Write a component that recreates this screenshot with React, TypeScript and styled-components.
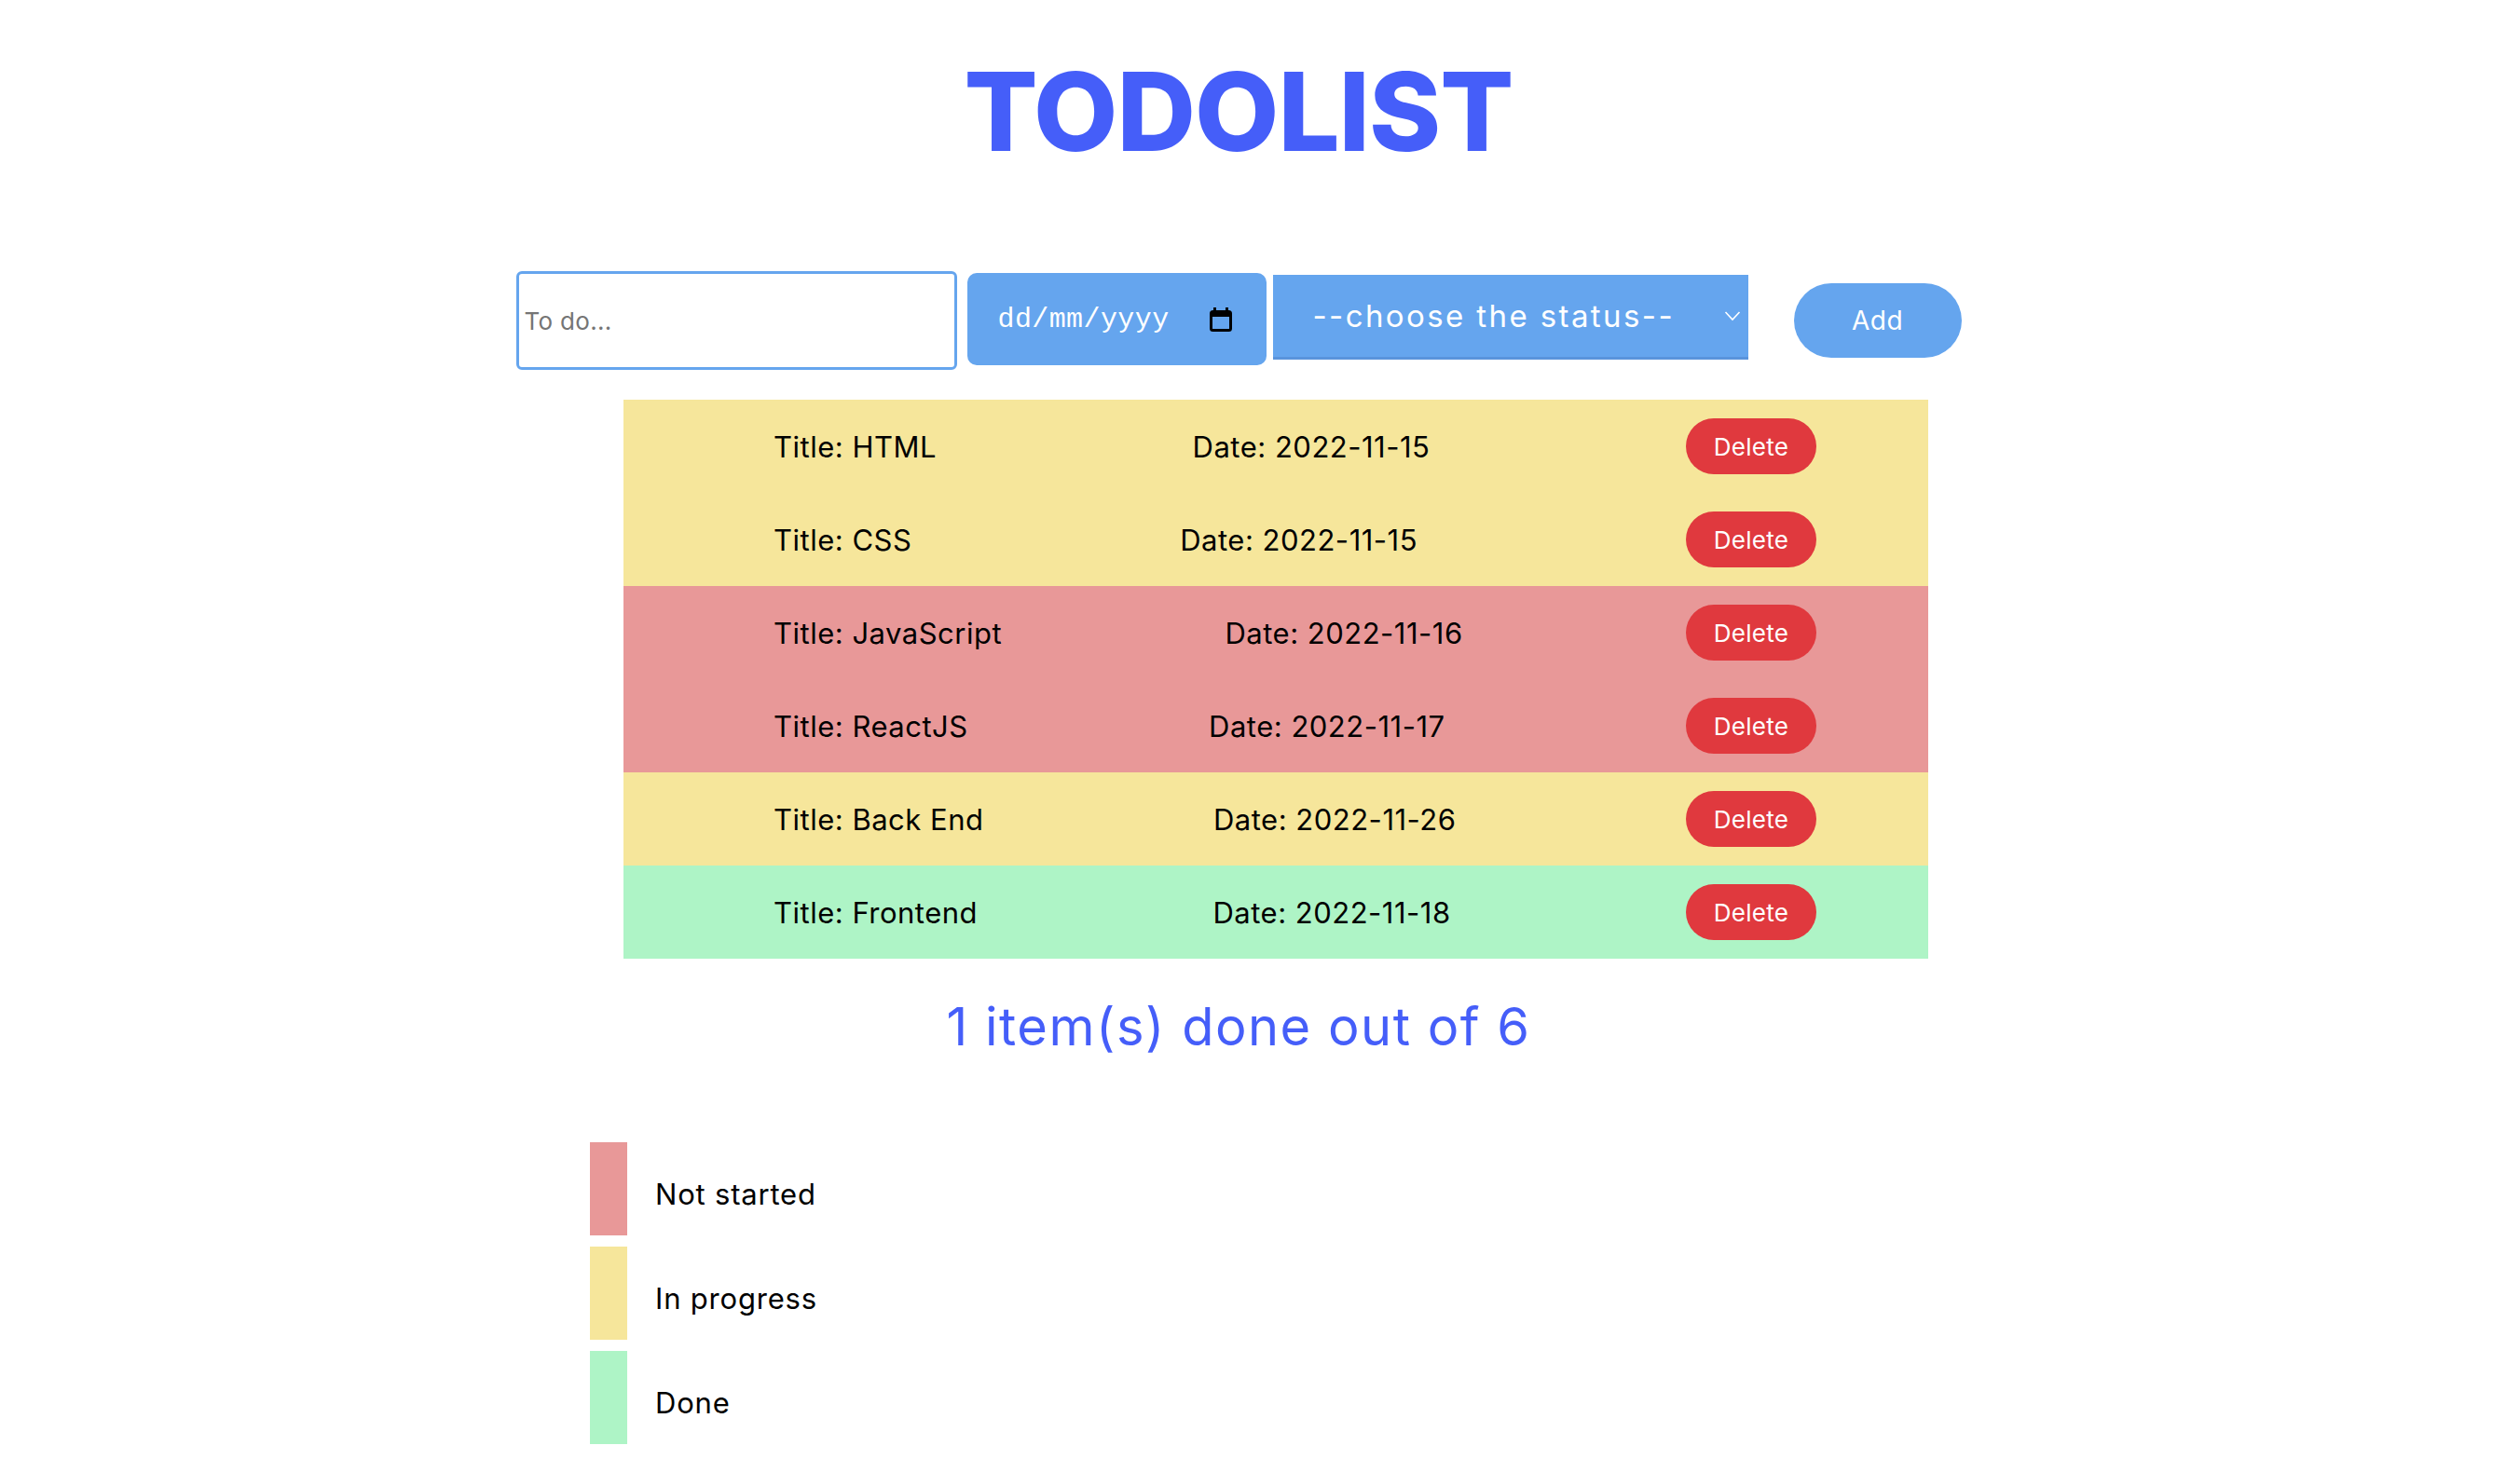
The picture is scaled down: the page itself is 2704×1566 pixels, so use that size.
import React from 'react';
import styled, { createGlobalStyle } from 'styled-components';

const GlobalStyle = createGlobalStyle`
  body {
    margin: 0;
    background: #ffffff;
    font-family: Inter, "Noto Sans", sans-serif;
    color: #000000;
  }
  * {
    box-sizing: border-box;
  }
`;

type Status = 'todo' | 'progress' | 'done';

const statusColors: Record<Status, string> = {
  todo: '#e89898',
  progress: '#f6e69b',
  done: '#aef4c6',
};

const Page = styled.div`
  padding: 61px 46px 0 0;
`;

const Heading = styled.h1`
  margin: 0;
  text-align: center;
  font-size: 117px;
  line-height: 117px;
  font-weight: 800;
  letter-spacing: -1px;
  color: #455ef9;
`;

const Form = styled.form`
  display: flex;
  justify-content: center;
  align-items: flex-start;
  margin-top: 113px;
`;

const TextInput = styled.input`
  width: 473px;
  height: 106px;
  border: 3px solid #65a5ee;
  border-radius: 6px;
  padding: 0 0 0 6px;
  font-family: Inter, sans-serif;
  font-size: 26px;
  letter-spacing: 0.3px;
  color: #222;
  outline: none;

  &::placeholder {
    color: #757575;
  }
`;

const DateField = styled.div`
  width: 321px;
  height: 99px;
  margin: 2px 0 0 11px;
  border-radius: 10px;
  background: #65a5ee;
  display: flex;
  align-items: center;
  justify-content: space-between;
  padding: 0 37px 0 33px;
  font-family: "Liberation Mono", "Courier New", monospace;
  font-size: 30px;
  letter-spacing: 0.4px;
  color: #ffffff;
`;

const SelectBox = styled.div`
  width: 510px;
  height: 91px;
  margin: 4px 0 0 7px;
  background: #65a5ee;
  border-bottom: 3px solid #5a94dc;
  display: flex;
  align-items: center;
  padding: 0 8px 0 0;
`;

const StatusSelect = styled.select`
  flex: 1;
  height: 100%;
  appearance: none;
  border: none;
  outline: none;
  background: transparent;
  padding: 0 0 0 43px;
  font-family: Inter, sans-serif;
  font-size: 33px;
  letter-spacing: 2.4px;
  color: #ffffff;
`;

const AddButton = styled.button`
  width: 180px;
  height: 80px;
  margin: 13px 0 0 49px;
  border: none;
  border-radius: 40px;
  background: #65a5ee;
  color: #ffffff;
  font-family: Inter, sans-serif;
  font-size: 28px;
  letter-spacing: 0.5px;
  cursor: pointer;
`;

const List = styled.ul`
  list-style: none;
  margin: 32px 0 0;
  padding: 0 0 0 80px;
  display: flex;
  flex-direction: column;
  align-items: center;
`;

const Row = styled.li<{ status: Status }>`
  width: 1400px;
  height: 100px;
  display: flex;
  align-items: center;
  justify-content: space-between;
  padding: 0 120px 0 161px;
  background: ${p => statusColors[p.status]};
  font-size: 31px;
  letter-spacing: 0.5px;
`;

const Cell = styled.span`
  white-space: nowrap;
`;

const DeleteButton = styled.button`
  width: 140px;
  height: 60px;
  border: none;
  border-radius: 30px;
  background: #e0393e;
  color: #ffffff;
  font-family: Inter, sans-serif;
  font-size: 26px;
  letter-spacing: 0.3px;
  cursor: pointer;
`;

const Counter = styled.p`
  margin: 40px 0 0;
  text-align: center;
  font-size: 56px;
  line-height: 66px;
  letter-spacing: 1.5px;
  color: #455ef9;
`;

const Legend = styled.ul`
  list-style: none;
  margin: 91px 0 0;
  padding: 0 0 0 633px;
  display: flex;
  flex-direction: column;
  gap: 12px;
`;

const LegendItem = styled.li`
  display: flex;
  align-items: center;
  gap: 30px;
`;

const Swatch = styled.span<{ status: Status }>`
  width: 40px;
  height: 100px;
  background: ${p => statusColors[p.status]};
`;

const LegendLabel = styled.span`
  font-size: 31px;
  letter-spacing: 0.8px;
  padding-top: 11px;
`;

const todos: { title: string; date: string; status: Status }[] = [
  { title: 'HTML', date: '2022-11-15', status: 'progress' },
  { title: 'CSS', date: '2022-11-15', status: 'progress' },
  { title: 'JavaScript', date: '2022-11-16', status: 'todo' },
  { title: 'ReactJS', date: '2022-11-17', status: 'todo' },
  { title: 'Back End', date: '2022-11-26', status: 'progress' },
  { title: 'Frontend', date: '2022-11-18', status: 'done' },
];

const CalendarIcon = () => (
  <svg width="24" height="26" viewBox="0 0 24 26">
    <rect x="1.5" y="4.5" width="21" height="20" rx="2" fill="none" stroke="#000" strokeWidth="3" />
    <rect x="1" y="4" width="22" height="6" fill="#000" />
    <rect x="4" y="0" width="3" height="5" fill="#000" />
    <rect x="17" y="0" width="3" height="5" fill="#000" />
  </svg>
);

const Chevron = () => (
  <svg width="18" height="12" viewBox="0 0 18 12">
    <polyline points="1.5,2 9,10 16.5,2" fill="none" stroke="#fff" strokeWidth="1.6" />
  </svg>
);

export default function App() {
  const done = todos.filter(t => t.status === 'done').length;

  return (
    <Page>
      <GlobalStyle />
      <Heading>TODOLIST</Heading>

      <Form onSubmit={e => e.preventDefault()}>
        <TextInput type="text" placeholder="To do..." />
        <DateField>
          <span>dd/mm/yyyy</span>
          <CalendarIcon />
        </DateField>
        <SelectBox>
          <StatusSelect defaultValue="">
            <option value="">--choose the status--</option>
            <option value="todo">Not started</option>
            <option value="progress">In progress</option>
            <option value="done">Done</option>
          </StatusSelect>
          <Chevron />
        </SelectBox>
        <AddButton type="submit">Add</AddButton>
      </Form>

      <List>
        {todos.map(t => (
          <Row key={t.title} status={t.status}>
            <Cell>Title: {t.title}</Cell>
            <Cell>Date: {t.date}</Cell>
            <DeleteButton type="button">Delete</DeleteButton>
          </Row>
        ))}
      </List>

      <Counter>
        {done} item(s) done out of {todos.length}
      </Counter>

      <Legend>
        <LegendItem>
          <Swatch status="todo" />
          <LegendLabel>Not started</LegendLabel>
        </LegendItem>
        <LegendItem>
          <Swatch status="progress" />
          <LegendLabel>In progress</LegendLabel>
        </LegendItem>
        <LegendItem>
          <Swatch status="done" />
          <LegendLabel>Done</LegendLabel>
        </LegendItem>
      </Legend>
    </Page>
  );
}
